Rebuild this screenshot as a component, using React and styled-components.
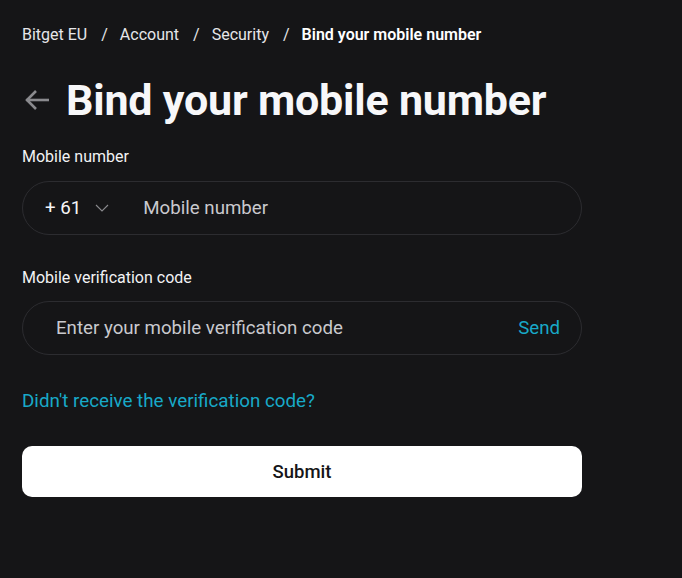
import React from "react";
import styled, { createGlobalStyle } from "styled-components";

const GlobalStyle = createGlobalStyle`
  html, body {
    margin: 0;
    background: #151517;
  }
  body {
    font-family: Roboto, "Liberation Sans", Arial, sans-serif;
    color: #f5f5f7;
  }
`;

const Page = styled.div`
  min-height: 578px;
  padding: 25px 22px 0;
  box-sizing: content-box;
  width: 560px;
`;

const Breadcrumb = styled.nav`
  display: flex;
  align-items: center;
  font-size: 16px;
  line-height: 20px;
  color: #e6e6e9;
`;

const Crumb = styled.span`
  font-weight: ${(p) => (p.$current ? 600 : 400)};
  color: ${(p) => (p.$current ? "#ffffff" : "#e6e6e9")};
`;

const Sep = styled.span`
  margin: 0 12px 0 14px;
`;

const TitleRow = styled.div`
  display: flex;
  align-items: center;
  gap: 16px;
  margin-top: 30px;
`;

const Back = styled.button`
  display: flex;
  align-items: center;
  background: none;
  border: 0;
  padding: 0;
  margin-left: 2px;
  color: #8a8a8e;
  cursor: pointer;
`;

const Title = styled.h1`
  margin: 0;
  font-size: 43px;
  line-height: 50px;
  font-weight: 700;
  color: #f7f7f9;
  letter-spacing: -0.2px;
`;

const Field = styled.div`
  margin-top: ${(p) => p.$top}px;
`;

const Label = styled.div`
  font-size: 16px;
  line-height: 20px;
  color: #f2f2f4;
  margin-bottom: ${(p) => p.$gap}px;
`;

const InputBox = styled.div`
  display: flex;
  align-items: center;
  height: 54px;
  box-sizing: border-box;
  border: 1px solid #2c2c30;
  border-radius: 27px;
  padding: 0 21px 0 ${(p) => p.$padLeft}px;
  font-size: 18.7px;
`;

const Prefix = styled.div`
  display: flex;
  align-items: center;
  gap: 14px;
  color: #f5f5f7;
  margin-right: 34px;
`;

const Placeholder = styled.span`
  flex: 1;
  color: #c9c9ce;
`;

const SendLink = styled.span`
  color: #18a9c8;
`;

const HelpLink = styled.a`
  display: block;
  margin-top: 34px;
  font-size: 18.8px;
  line-height: 24px;
  color: #18a9c8;
  text-decoration: none;
`;

const SubmitButton = styled.button`
  display: block;
  width: 100%;
  height: 51px;
  margin-top: 33px;
  border: 0;
  border-radius: 10px;
  background: #ffffff;
  color: #151517;
  font-family: inherit;
  font-size: 18.5px;
  font-weight: 500;
`;

const ArrowLeft = () => (
  <svg width="26" height="24" viewBox="0 0 26 24" fill="none" stroke="currentColor" strokeWidth="2.6">
    <path d="M2.5 12H25" />
    <path d="M12 3L3 12l9 9" />
  </svg>
);

const Chevron = () => (
  <svg width="14" height="8" viewBox="0 0 14 8" fill="none" stroke="#8a8a8e" strokeWidth="1.1">
    <path d="M1 1l6 6 6-6" />
  </svg>
);

export default function App() {
  return (
    <Page>
      <GlobalStyle />
      <Breadcrumb>
        <Crumb>Bitget EU</Crumb>
        <Sep>/</Sep>
        <Crumb>Account</Crumb>
        <Sep>/</Sep>
        <Crumb>Security</Crumb>
        <Sep>/</Sep>
        <Crumb $current>Bind your mobile number</Crumb>
      </Breadcrumb>

      <TitleRow>
        <Back aria-label="Back">
          <ArrowLeft />
        </Back>
        <Title>Bind your mobile number</Title>
      </TitleRow>

      <Field $top={22}>
        <Label $gap={14}>Mobile number</Label>
        <InputBox $padLeft={22}>
          <Prefix>
            <span>+ 61</span>
            <Chevron />
          </Prefix>
          <Placeholder>Mobile number</Placeholder>
        </InputBox>
      </Field>

      <Field $top={33}>
        <Label $gap={13}>Mobile verification code</Label>
        <InputBox $padLeft={33}>
          <Placeholder>Enter your mobile verification code</Placeholder>
          <SendLink>Send</SendLink>
        </InputBox>
      </Field>

      <HelpLink href="#">Didn't receive the verification code?</HelpLink>

      <SubmitButton>Submit</SubmitButton>
    </Page>
  );
}
